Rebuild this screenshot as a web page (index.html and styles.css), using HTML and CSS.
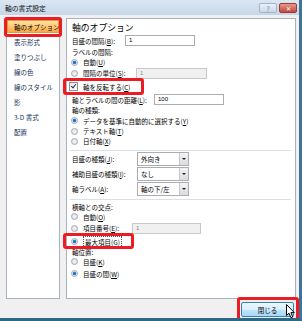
FILE: index.html
```html
<!DOCTYPE html>
<html lang="ja">

<head>
  <meta charset="UTF-8">
  <meta name="viewport" content="width=device-width, initial-scale=1">
  <title>軸の書式設定</title>
  <link rel="stylesheet" href="styles.css">
</head>

<body>
  <div class="window">
    <div class="titlebar">
      <span class="title">軸の書式設定</span>
      <div class="caption-buttons">
        <span class="cap-btn help">?</span>
        <span class="cap-btn close">✕</span>
      </div>
    </div>

    <div class="main">
      <ul class="nav">
        <li class="active">軸のオプション</li>
        <li>表示形式</li>
        <li>塗りつぶし</li>
        <li>線の色</li>
        <li>線のスタイル</li>
        <li>影</li>
        <li>3-D 書式</li>
        <li>配置</li>
      </ul>

      <div class="panel">
        <h1>軸のオプション</h1>

        <div class="row">
          <span class="lbl w53">目盛の間隔(<u>B</u>):</span>
          <span class="input w70">1</span>
        </div>
        <div class="row">ラベルの間隔:</div>
        <div class="row r10"><span class="radio on"></span>自動(<u>U</u>)</div>
        <div class="row r12">
          <span class="radio"></span>
          <span class="lbl w53">間隔の単位(<u>S</u>):</span>
          <span class="input off w71">1</span>
        </div>
        <div class="row r15"><span class="check"></span>軸を反転する(<u>C</u>)</div>
        <div class="row">
          <span class="lbl w82">軸とラベルの間の距離(<u>L</u>):</span>
          <span class="input w70">100</span>
        </div>
        <div class="row r10">軸の種類:</div>
        <div class="row"><span class="radio on"></span>データを基準に自動的に選択する(<u>Y</u>)</div>
        <div class="row r10"><span class="radio"></span>テキスト軸(<u>T</u>)</div>
        <div class="row r10"><span class="radio"></span>日付軸(<u>X</u>)</div>

        <div class="sep sep-a"></div>

        <div class="row r15">
          <span class="lbl w65">目盛の種類(<u>J</u>):</span>
          <span class="select">外向き<span class="arrow"></span></span>
        </div>
        <div class="row r15">
          <span class="lbl w65">補助目盛の種類(<u>I</u>):</span>
          <span class="select">なし<span class="arrow"></span></span>
        </div>
        <div class="row r16">
          <span class="lbl w65">軸ラベル(<u>A</u>):</span>
          <span class="select">軸の下/左<span class="arrow"></span></span>
        </div>

        <div class="sep sep-b"></div>

        <div class="row">横軸との交点:</div>
        <div class="row r9"><span class="radio"></span>自動(<u>O</u>)</div>
        <div class="row r14">
          <span class="radio"></span>
          <span class="lbl w49">項目番号(<u>E</u>):</span>
          <span class="input off w69">1</span>
        </div>
        <div class="row r13"><span class="radio on"></span><span class="focus">最大項目(<u>G</u>)</span></div>
        <div class="row r7">軸位置:</div>
        <div class="row r13"><span class="radio"></span>目盛(<u>K</u>)</div>
        <div class="row"><span class="radio on"></span>目盛の間(<u>W</u>)</div>
      </div>
    </div>

    <div class="footer">
      <button class="btn">閉じる</button>
    </div>

    <!-- red callouts drawn over the dialog -->
    <div class="mark mark-nav"></div>
    <div class="mark mark-check"></div>
    <div class="mark mark-max"></div>
    <div class="mark mark-btn"></div>

    <svg class="cursor" width="10" height="15" viewBox="0 0 10 15">
      <path d="M0.5 0.5 L0.5 11.5 L3 9.2 L5 13.8 L6.8 13 L4.9 8.6 L8.3 8.6 Z" fill="#fff" stroke="#000" stroke-width="1" stroke-linejoin="round"/>
    </svg>
  </div>
</body>

</html>
```

FILE: styles.css
```css
body {
  margin: 0;
  font-family: "Noto Sans CJK JP", "Noto Sans", sans-serif;
  color: #000;
}

.window {
  position: relative;
  width: 302px;
  height: 321px;
  box-sizing: border-box;
  background: #f0f0f0;
  border-right: 3px solid #3d7596;
  border-bottom: 3px solid #2f6887;
  overflow: hidden;
}

.titlebar {
  height: 15px;
  display: flex;
  align-items: center;
  justify-content: space-between;
  padding: 0 2px 0 5px;
  background: linear-gradient(#dbe6f2, #c6d6e9);
}

.title {
  font-size: 6.8px;
  color: #111;
}

.caption-buttons {
  display: flex;
  gap: 2px;
}

.cap-btn {
  width: 18px;
  height: 10px;
  border-radius: 2px;
  font-size: 7px;
  line-height: 10px;
  text-align: center;
  box-sizing: border-box;
}

.help {
  background: linear-gradient(#eaf1f8, #c9d8e8);
  border: 1px solid #a3b5c9;
  color: #9aa4b0;
  font-weight: bold;
}

.close {
  background: linear-gradient(#e59a8c, #c4493a);
  border: 1px solid #9c3a30;
  color: #fff;
  font-size: 6px;
}

.main {
  display: flex;
  padding: 3px 3px 0 6px;
  height: 281px;
}

.nav {
  list-style: none;
  margin: 0 6px 0 0;
  padding: 1px 0 0;
  width: 54px;
  box-sizing: border-box;
  background: #fff;
  border: 1px solid #a9b3bd;
}

.nav li {
  height: 15px;
  line-height: 15px;
  padding-left: 7px;
  font-size: 6.5px;
  color: #15325a;
  white-space: nowrap;
}

.nav li.active {
  height: 13px;
  line-height: 13px;
  margin-bottom: 2px;
  box-sizing: border-box;
  background: linear-gradient(#ffe1a6, #ffc46f 55%, #f9a848);
  border: 1px solid #e59a3a;
  padding-left: 6px;
  color: #000;
}

.panel {
  flex: 1;
  background: #fff;
  border: 1px solid #a9b3bd;
  padding: 2px 4px 0 5px;
  font-size: 6.5px;
}

.panel h1 {
  margin: 0;
  height: 14px;
  line-height: 14px;
  font-size: 8.8px;
  font-weight: normal;
  color: #000;
}

.row {
  display: flex;
  align-items: center;
  height: 11px;
  white-space: nowrap;
}

.r7 { height: 7px; }
.r9 { height: 9px; }
.r10 { height: 10px; }
.r12 { height: 12px; }
.r13 { height: 13px; }
.r14 { height: 14px; }
.r15 { height: 15px; }
.r16 { height: 16px; }

.lbl {
  flex: none;
}

.w49 { width: 49px; }
.w53 { width: 53px; }
.w65 { width: 65px; }
.w82 { width: 82px; }

.input {
  height: 11px;
  line-height: 9px;
  box-sizing: border-box;
  border: 1px solid #abadb3;
  background: #fff;
  padding-left: 3px;
  font-size: 6px;
  font-family: "Liberation Sans", sans-serif;
}

.input.off {
  background: #f0f0f0;
  border-color: #c8c8c8;
  color: #888;
}

.w69 { width: 69px; }
.w70 { width: 70px; }
.w71 { width: 71px; }

.radio {
  flex: none;
  width: 7px;
  height: 7px;
  margin: 0 5px 0 -1px;
  box-sizing: border-box;
  border-radius: 50%;
  border: 1px solid #a3a9b1;
  background: radial-gradient(#f4f4f4, #d8dde3);
}

.radio.on {
  background: radial-gradient(circle, #1c5fb0 0, #3a8ad6 1.6px, #eef1f4 2.2px);
}

.check {
  flex: none;
  width: 9px;
  height: 9px;
  margin: 0 5px 0 -3px;
  box-sizing: border-box;
  border: 1px solid #8e8f8f;
  background: linear-gradient(#eaeaea, #fff);
  position: relative;
}

.check::after {
  content: "";
  position: absolute;
  left: 2px;
  top: 0;
  width: 2px;
  height: 4px;
  border: solid #333;
  border-width: 0 1.3px 1.3px 0;
  transform: rotate(40deg);
}

.sep {
  border-bottom: 1px solid #d9e0e6;
  margin-left: -2px;
}

.sep-a {
  height: 4px;
}

.sep-b {
  height: 2px;
  margin-bottom: 1px;
}

.select {
  position: relative;
  width: 52px;
  height: 14px;
  line-height: 12px;
  box-sizing: border-box;
  border: 1px solid #abadb3;
  background: #fff;
  padding-left: 3px;
}

.arrow {
  position: absolute;
  right: 0;
  top: 0;
  width: 9px;
  height: 12px;
  box-sizing: border-box;
  border-left: 1px solid #c5c8cc;
  background: linear-gradient(#f4f4f4, #dcdcdc);
}

.arrow::after {
  content: "";
  position: absolute;
  left: 2px;
  top: 5px;
  border-left: 2px solid transparent;
  border-right: 2px solid transparent;
  border-top: 2px solid #222;
}

.focus {
  border: 1px dotted #555;
  padding: 0 1px;
  line-height: 10px;
}

.footer {
  display: flex;
  justify-content: flex-end;
  padding: 3px 5px 0 0;
}

.btn {
  width: 53px;
  height: 15px;
  padding: 0;
  border: 1px solid #3c7fb1;
  border-radius: 2px;
  background: linear-gradient(#eaf6fd, #d9f0fc 50%, #bee6fd 51%, #a7d9f5);
  font-family: "Noto Sans CJK JP", sans-serif;
  font-size: 6.5px;
  color: #000;
}

.mark {
  position: absolute;
  box-sizing: border-box;
  border: 3px solid #ec1c24;
  border-radius: 3px;
}

.mark-nav { left: 4px; top: 17px; width: 58px; height: 20px; }
.mark-check { left: 63px; top: 78px; width: 81px; height: 17px; }
.mark-max { left: 63px; top: 233px; width: 71px; height: 16px; }
.mark-btn { left: 237px; top: 297px; width: 62px; height: 24px; }

.cursor {
  position: absolute;
  left: 286px;
  top: 304px;
}
```
